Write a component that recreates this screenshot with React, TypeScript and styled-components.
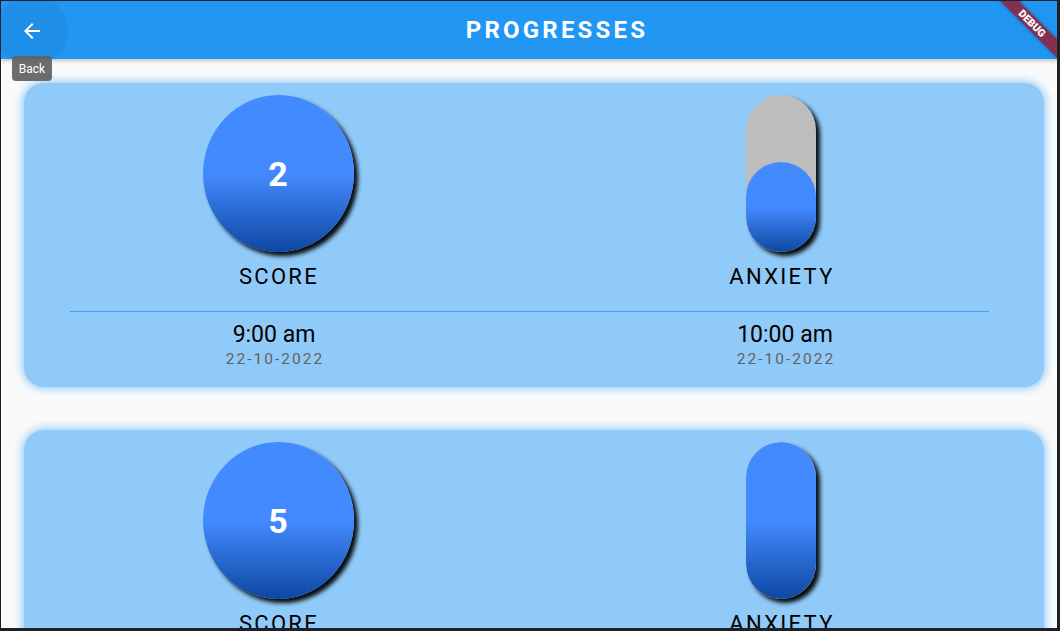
import React from "react";
import styled, { createGlobalStyle } from "styled-components";

const GlobalStyle = createGlobalStyle`
  html, body { margin: 0; padding: 0; background: #1f2023; }
  body { font-family: Roboto, "Noto Sans", sans-serif; }
`;

const Frame = styled.div`
  position: relative;
  margin: 1px 3px 3px 1px;
  width: 1056px;
  height: 627px;
  background: #fafafa;
  overflow: hidden;
  display: flex;
  flex-direction: column;
`;

const AppBar = styled.header`
  position: relative;
  flex: 0 0 58px;
  height: 58px;
  background: #2196f3;
  display: flex;
  align-items: center;
  justify-content: center;
  padding-left: 56px;
  overflow: hidden;
  box-shadow: 0 2px 4px rgba(0, 0, 0, 0.22);
  z-index: 2;
`;

const Title = styled.h1`
  margin: 0;
  color: #fff;
  font-size: 24px;
  font-weight: 700;
  letter-spacing: 3.2px;
  line-height: 28px;
`;

const BackButton = styled.button`
  position: absolute;
  left: -5px;
  top: -6px;
  width: 72px;
  height: 72px;
  border: none;
  border-radius: 50%;
  background: rgba(0, 0, 0, 0.05);
  display: flex;
  align-items: center;
  justify-content: center;
  padding: 0;
  cursor: pointer;
`;

const Tooltip = styled.div`
  position: absolute;
  left: 11px;
  top: 55px;
  width: 40px;
  height: 25px;
  border-radius: 4px;
  background: rgba(97, 97, 97, 0.92);
  color: #fff;
  font-size: 12px;
  display: flex;
  align-items: center;
  justify-content: center;
  z-index: 3;
`;

const BannerClip = styled.div`
  position: absolute;
  top: 0;
  right: 0;
  width: 100px;
  height: 100px;
  overflow: hidden;
  pointer-events: none;
  z-index: 4;
`;

const Ribbon = styled.div`
  position: absolute;
  left: 15px;
  top: 16px;
  width: 120px;
  height: 13px;
  transform: rotate(45deg);
  background: #843050;
  color: #fff;
  font-size: 10.5px;
  font-weight: 900;
  line-height: 13px;
  text-align: center;
  box-shadow: 0 0 4px rgba(0, 0, 0, 0.35);
`;

const Content = styled.main`
  flex: 1;
  display: flex;
  flex-direction: column;
  gap: 43px;
  padding: 24px 13px 0 23px;
  overflow: hidden;
`;

const Card = styled.section`
  flex: 0 0 auto;
  height: 304px;
  background: #90caf9;
  border-radius: 20px;
  box-shadow: 0 0 8px 2px rgba(144, 202, 249, 0.95);
  padding-top: 12px;
  box-sizing: border-box;
`;

const Row = styled.div<{ $left: number; $right: number }>`
  display: grid;
  grid-template-columns: 200px 200px;
  justify-content: space-between;
  padding: 0 ${(p) => p.$right}px 0 ${(p) => p.$left}px;
`;

const Indicator = styled.div`
  display: flex;
  flex-direction: column;
  align-items: center;
`;

const gradient = `linear-gradient(180deg, #448aff 0%, #448aff 50%, #0d47a1 100%)`;

const Circle = styled.div`
  width: 151px;
  height: 157px;
  border-radius: 50%;
  background: ${gradient};
  box-shadow: 4px 4px 4px rgba(0, 0, 0, 0.95);
  display: flex;
  align-items: center;
  justify-content: center;
  color: #fff;
  font-size: 34px;
  font-weight: 700;
`;

const Pill = styled.div`
  width: 70px;
  height: 157px;
  border-radius: 35px;
  background: #bdbdbd;
  box-shadow: 4px 4px 4px rgba(0, 0, 0, 0.95);
  display: flex;
  flex-direction: column;
  justify-content: flex-end;
  overflow: hidden;
`;

const Fill = styled.div`
  width: 100%;
  border-radius: 35px;
  background: ${gradient};
`;

const Label = styled.div`
  margin-top: 12px;
  font-size: 22px;
  font-weight: 400;
  letter-spacing: 2.3px;
  line-height: 26px;
  color: #000;
  padding-left: 2px;
`;

const Divider = styled.div`
  margin: 21px 55px 0 46px;
  height: 1px;
  background: #3f9ff0;
`;

const Time = styled.div`
  margin-top: 9px;
  font-size: 23px;
  font-weight: 400;
  line-height: 27px;
  color: #000;
`;

const DateText = styled.div`
  margin-top: 1px;
  font-size: 15.5px;
  letter-spacing: 2px;
  line-height: 20px;
  color: #616161;
  padding-left: 2px;
`;

type Entry = {
  score: number;
  anxiety: number;
  scoreTime: string;
  anxietyTime: string;
  date: string;
};

const entries: Entry[] = [
  { score: 2, anxiety: 90 / 157, scoreTime: "9:00 am", anxietyTime: "10:00 am", date: "22-10-2022" },
  { score: 5, anxiety: 1, scoreTime: "9:00 am", anxietyTime: "10:00 am", date: "22-10-2022" },
];

const ArrowBack = () => (
  <svg width="24" height="24" viewBox="0 0 24 24" fill="#fff">
    <path d="M20 11H7.83l5.59-5.59L12 4l-8 8 8 8 1.41-1.41L7.83 13H20v-2z" />
  </svg>
);

export default function App() {
  return (
    <>
      <GlobalStyle />
      <Frame>
        <AppBar>
          <BackButton aria-label="Back">
            <ArrowBack />
          </BackButton>
          <Title>PROGRESSES</Title>
        </AppBar>
        <Tooltip>Back</Tooltip>
        <BannerClip>
          <Ribbon>DEBUG</Ribbon>
        </BannerClip>
        <Content>
          {entries.map((e, i) => (
            <Card key={i}>
              <Row $left={154} $right={163}>
                <Indicator>
                  <Circle>{e.score}</Circle>
                  <Label>SCORE</Label>
                </Indicator>
                <Indicator>
                  <Pill>
                    <Fill style={{ height: `${e.anxiety * 100}%` }} />
                  </Pill>
                  <Label>ANXIETY</Label>
                </Indicator>
              </Row>
              <Divider />
              <Row $left={150} $right={159}>
                <Indicator>
                  <Time>{e.scoreTime}</Time>
                  <DateText>{e.date}</DateText>
                </Indicator>
                <Indicator>
                  <Time>{e.anxietyTime}</Time>
                  <DateText>{e.date}</DateText>
                </Indicator>
              </Row>
            </Card>
          ))}
        </Content>
      </Frame>
    </>
  );
}
